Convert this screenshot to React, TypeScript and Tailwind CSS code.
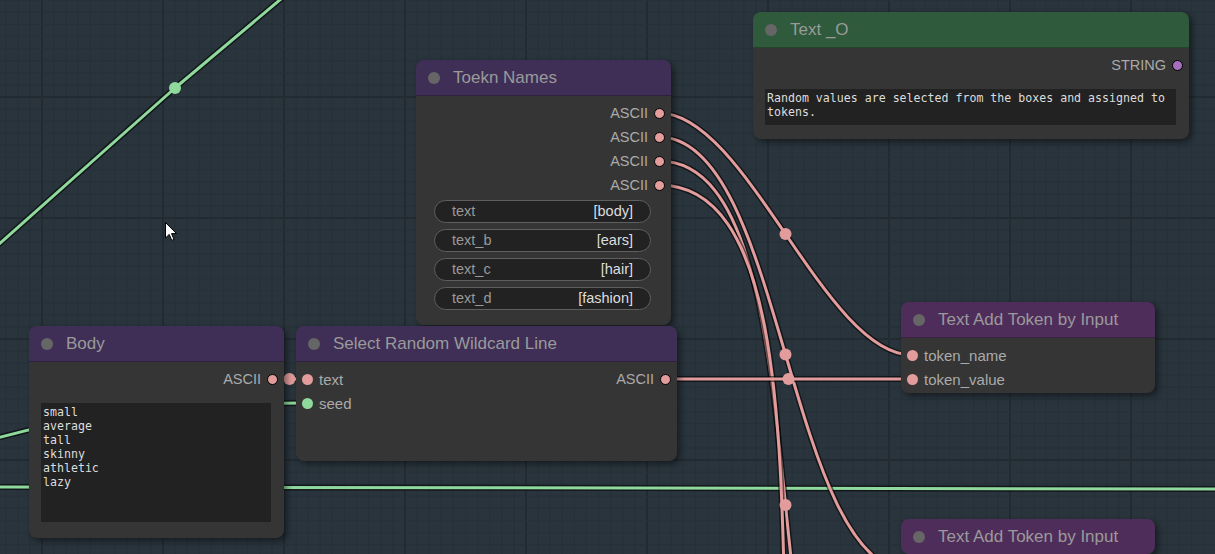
import React from "react";

type Pt = [number, number];

const PINK = "#e39c9c";
const GREEN = "#8fd99c";
const TITLE_PURPLE = "#3f2e56";

// node boxes on the canvas
const N = {
    tok: { x: 416, y: 60, w: 255, h: 265 },
    txt: { x: 753, y: 12, w: 436, h: 127 },
    body: { x: 29, y: 326, w: 255, h: 212 },
    sel: { x: 296, y: 326, w: 381, h: 135 },
    add1: { x: 901, y: 302, w: 254, h: 91 },
    add2: { x: 901, y: 519, w: 254, h: 35 },
};

type Box = { x: number; y: number; w: number; h: number };

const outPos = (n: Box, i: number): Pt => [n.x + n.w - 12, n.y + 53 + 24 * i];
const inPos = (n: Box, i: number): Pt => [n.x + 11, n.y + 53 + 24 * i];

function spline(a: Pt, b: Pt) {
    const d = Math.hypot(b[0] - a[0], b[1] - a[1]) * 0.25;
    const c1: Pt = [a[0] + d, a[1]];
    const c2: Pt = [b[0] - d, b[1]];
    const mid: Pt = [
        0.125 * a[0] + 0.375 * c1[0] + 0.375 * c2[0] + 0.125 * b[0],
        0.125 * a[1] + 0.375 * c1[1] + 0.375 * c2[1] + 0.125 * b[1],
    ];
    return {
        d: `M ${a[0]} ${a[1]} C ${c1[0]} ${c1[1]}, ${c2[0]} ${c2[1]}, ${b[0]} ${b[1]}`,
        mid,
    };
}

const pinkLinks = [
    spline(outPos(N.tok, 0), inPos(N.add1, 0)),
    spline(outPos(N.tok, 1), inPos(N.add2, 0)),
    spline(outPos(N.tok, 2), [912, 849]),
    spline(outPos(N.tok, 3), [912, 1090]),
    spline(outPos(N.sel, 0), inPos(N.add1, 1)),
    spline(outPos(N.body, 0), inPos(N.sel, 0)),
];

const greenPaths = [
    "M -20 261 L 175 88 L 300 -17",
    "M -10 440 C 60 420, 150 403, 307 403",
    "M -10 487 L 1225 489",
];

function Grid() {
    const lines: React.ReactNode[] = [];
    for (let k = -4; k < 100; k++) {
        const x = 42 + 12.1 * k;
        if (x < -2 || x > 1217) continue;
        const major = k % 10 === 0;
        lines.push(
            <line key={"v" + k} x1={x} y1={0} x2={x} y2={554} stroke={major ? "#222b32" : "#26313a"} strokeWidth={major ? 2 : 1} />
        );
    }
    for (let k = -9; k < 50; k++) {
        const y = 97 + 12.1 * k;
        if (y < -2 || y > 556) continue;
        const major = k % 10 === 0;
        lines.push(
            <line key={"h" + k} x1={0} y1={y} x2={1215} y2={y} stroke={major ? "#222b32" : "#26313a"} strokeWidth={major ? 2 : 1} />
        );
    }
    return <g>{lines}</g>;
}

function Wires() {
    return (
        <svg className="absolute inset-0" width={1215} height={554}>
            <Grid />
            {greenPaths.map((d, i) => (
                <g key={"g" + i} fill="none" strokeLinecap="round" strokeLinejoin="round">
                    <path d={d} stroke="rgba(0,0,0,0.55)" strokeWidth={6} />
                    <path d={d} stroke={GREEN} strokeWidth={3} />
                </g>
            ))}
            <circle cx={175} cy={88} r={6} fill={GREEN} />
            {pinkLinks.map((l, i) => (
                <g key={"p" + i} fill="none">
                    <path d={l.d} stroke="rgba(0,0,0,0.55)" strokeWidth={6} />
                    <path d={l.d} stroke={PINK} strokeWidth={3} />
                </g>
            ))}
            {pinkLinks.map((l, i) => (
                <circle key={"m" + i} cx={l.mid[0]} cy={l.mid[1]} r={6} fill={PINK} />
            ))}
        </svg>
    );
}

function SlotDot({ color, ring }: { color: string; ring?: boolean }) {
    return (
        <span
            className={`block w-[11px] h-[11px] rounded-full shrink-0 ${ring ? "border border-black" : ""}`}
            style={{ backgroundColor: color }}
        />
    );
}

type Slot = { label: string; color: string; ring?: boolean };

function Node({
    box,
    title,
    titleBg,
    inputs = [],
    outputs = [],
    children,
}: {
    box: Box;
    title: string;
    titleBg: string;
    inputs?: Slot[];
    outputs?: Slot[];
    children?: React.ReactNode;
}) {
    const rows = Math.max(inputs.length, outputs.length);
    return (
        <div
            className="absolute flex flex-col rounded-lg overflow-hidden bg-[#353535] shadow-[3px_3px_6px_rgba(0,0,0,0.45)]"
            style={{ left: box.x, top: box.y, width: box.w, height: box.h }}
        >
            <div
                className="h-9 shrink-0 flex items-center border-b border-black/25 pl-3"
                style={{ backgroundColor: titleBg }}
            >
                <span className="block w-3 h-3 rounded-full bg-[#666]" />
                <span className="ml-[13px] text-[17px] text-[#9a9a9a] leading-none">{title}</span>
            </div>
            {rows === 0 ? null : (
                <div className="pt-[5px] flex justify-between">
                    <div className="flex flex-col">
                        {inputs.map((s) => (
                            <div key={s.label} className="h-6 flex items-center gap-[6px] pl-[6px]">
                                <SlotDot color={s.color} ring={s.ring} />
                                <span className="text-[15px] text-[#aaa] leading-none">{s.label}</span>
                            </div>
                        ))}
                    </div>
                    <div className="flex flex-col items-end">
                        {outputs.map((s, i) => (
                            <div key={i} className="h-6 flex items-center gap-[6px] pr-[6px]">
                                <span className="text-[14.5px] text-[#aaa] leading-none">{s.label}</span>
                                <SlotDot color={s.color} ring={s.ring} />
                            </div>
                        ))}
                    </div>
                </div>
            )}
            {children}
        </div>
    );
}

function Widget({ label, value }: { label: string; value: string }) {
    return (
        <div className="h-[23px] flex items-center justify-between rounded-full border border-[#5f5f5f] bg-[#222] px-[17px] text-[14.5px] leading-none">
            <span className="text-[#999]">{label}</span>
            <span className="text-[#ddd]">{value}</span>
        </div>
    );
}

function Cursor() {
    return (
        <svg className="absolute" style={{ left: 165, top: 222 }} width={13} height={20} viewBox="0 0 13 20">
            <path d="M0.5 0.5 L0.5 16 L4.2 12.4 L6.8 18.4 L9 17.4 L6.5 11.6 L11.5 11.6 Z" fill="#fff" stroke="#000" strokeWidth={1} />
        </svg>
    );
}

export default function App() {
    const ascii: Slot = { label: "ASCII", color: PINK, ring: true };
    return (
        <div className="relative w-[1215px] h-[554px] overflow-hidden bg-[#29343c] font-['Liberation_Sans',Arial,sans-serif]">
            <Wires />

            <Node box={N.txt} title="Text _O" titleBg="#2f5a3c" outputs={[{ label: "STRING", color: "#a46fbc", ring: true }]}>
                <div className="mt-3 ml-3 mr-[13px] h-9 bg-[#222] pl-[2px] pt-[2px] font-['DejaVu_Sans_Mono',monospace] text-[11.6px] leading-[14px] text-[#ddd]">
                    Random values are selected from the boxes and assigned to tokens.
                </div>
            </Node>

            <Node box={N.tok} title="Toekn Names" titleBg={TITLE_PURPLE} outputs={[ascii, ascii, ascii, ascii]}>
                <div className="mt-[3px] ml-[18px] mr-5 flex flex-col gap-[6px]">
                    <Widget label="text" value="[body]" />
                    <Widget label="text_b" value="[ears]" />
                    <Widget label="text_c" value="[hair]" />
                    <Widget label="text_d" value="[fashion]" />
                </div>
            </Node>

            <Node box={N.body} title="Body" titleBg={TITLE_PURPLE} outputs={[ascii]}>
                <div className="mt-3 ml-3 mr-[13px] h-[119px] bg-[#222] pl-[2px] pt-[2px] font-['DejaVu_Sans_Mono',monospace] text-[11.6px] leading-[14px] text-[#ddd] whitespace-pre">
                    {"small\naverage\ntall\nskinny\nathletic\nlazy"}
                </div>
            </Node>

            <Node
                box={N.sel}
                title="Select Random Wildcard Line"
                titleBg={TITLE_PURPLE}
                inputs={[
                    { label: "text", color: PINK },
                    { label: "seed", color: GREEN },
                ]}
                outputs={[ascii]}
            />

            <Node
                box={N.add1}
                title="Text Add Token by Input"
                titleBg="#4f2d5b"
                inputs={[
                    { label: "token_name", color: PINK },
                    { label: "token_value", color: PINK },
                ]}
            />

            <Node box={N.add2} title="Text Add Token by Input" titleBg="#4f2d5b" />

            <Cursor />
        </div>
    );
}
